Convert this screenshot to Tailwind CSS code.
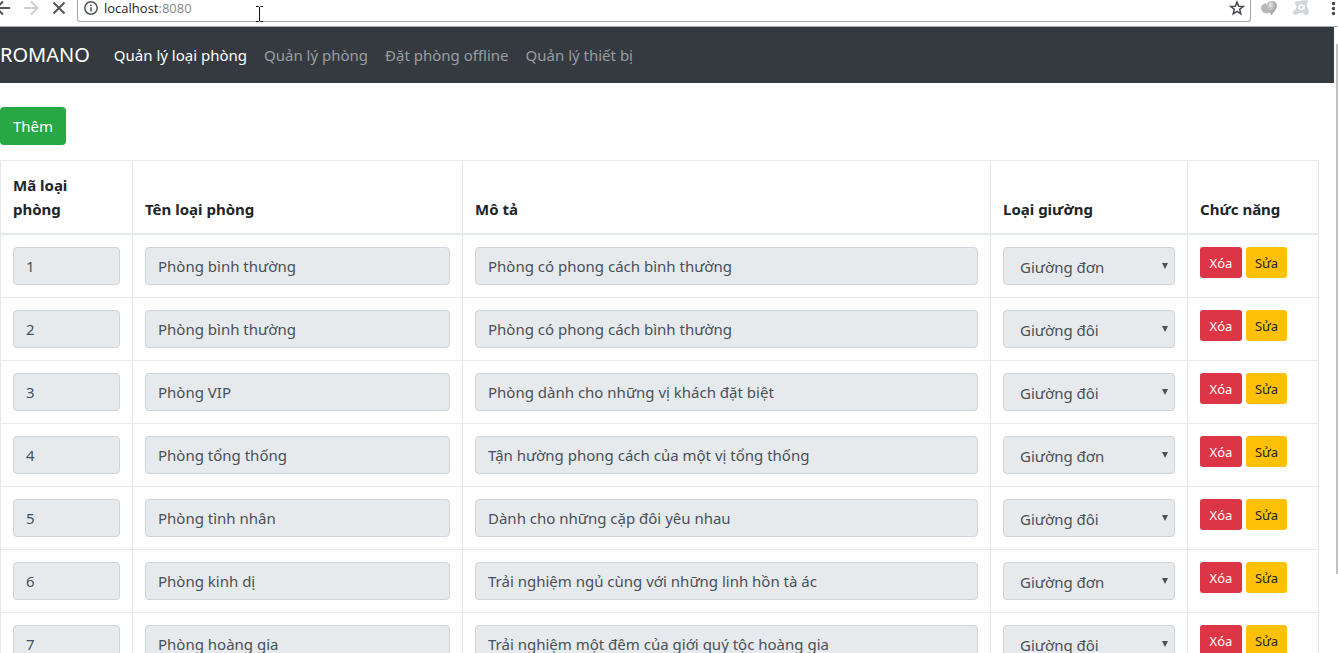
<!DOCTYPE html>
<html lang="vi">
<head>
<meta charset="utf-8">
<title>ROMANO</title>
<script src="https://cdn.jsdelivr.net/npm/@tailwindcss/browser@4"></script>
</head>
<body class="flex h-screen flex-col overflow-hidden bg-[#fefefe] font-['Noto_Sans','Open_Sans',sans-serif] text-[15px] leading-6 text-[#212529]">
<header class="flex h-[27px] shrink-0 items-start border-b border-[#a9acab] bg-[#fefefe]">
  <div class="flex w-[77px] shrink-0">
    <button aria-label="Back" class="-ml-2 h-4 w-5"><svg width="20" height="16" viewBox="0 0 20 16" fill="none" stroke="#50555a" stroke-width="2"><path d="M18 8H5M11 1.500L4.500 8l6.500 6.500"/></svg></button>
    <button aria-label="Forward" class="ml-2.5 h-4 w-5"><svg width="20" height="16" viewBox="0 0 20 16" fill="none" stroke="#ccced0" stroke-width="2"><path d="M2 8h13M9 1.500L15.500 8 9 14.500"/></svg></button>
    <button aria-label="Stop" class="ml-2 h-4 w-[18px]"><svg width="18" height="16" viewBox="0 0 18 16" fill="none" stroke="#50555a" stroke-width="2"><path d="M3.500 2.500l11 11M14.500 2.500l-11 11"/></svg></button>
  </div>
  <div class="flex h-[22px] flex-1 rounded-b-[3px] border-x border-b border-[#a3a6a6] bg-white px-1.5">
    <svg class="mt-px shrink-0" width="14" height="14" viewBox="0 0 14 14" fill="none" stroke="#50555a" stroke-width="1.500"><circle cx="7" cy="7" r="6.200"/><path d="M7 6.300v4.200M7 3.500v1.600"/></svg>
    <a href="#" class="ml-1.5 w-[90px] font-['Open_Sans','Noto_Sans',sans-serif] text-[13px] leading-4 text-[#1f2326]">localhost<span class="text-[#85898c]">:8080</span></a>
    <svg class="ml-[61px] mt-1.5" width="9" height="16" viewBox="0 0 9 16" fill="none" stroke="#111" stroke-width="1"><path d="M1 .5h2.500l1 1 1-1H8M4.500 1v14M1 15.500h2.500l1-1 1 1H8"/></svg>
    <button aria-label="Bookmark" class="-mr-px ml-auto h-4 w-4"><svg width="16" height="16" viewBox="0 0 16 16" fill="none" stroke="#454a50" stroke-width="1.500"><path d="M8 2l1.700 4.200 4.500.3-3.500 2.900 1.100 4.400L8 11.400l-3.800 2.400 1.100-4.400-3.500-2.900 4.500-.3z"/></svg></button>
  </div>
  <div class="flex w-[87px] shrink-0 overflow-hidden pl-[9px]">
    <svg class="shrink-0" width="18" height="17" viewBox="0 0 18 17">
      <defs><radialGradient id="balloon" cx=".4" cy=".3" r=".7"><stop stop-color="#e5e5e5"/><stop offset="1" stop-color="#8e8e8e"/></radialGradient></defs>
      <path d="M6 3C2 4 0 7 1.500 10.500 3 13.500 7 14 9 13z" fill="#b9b9b9"/><path d="M11.500 1c4 0 6 3 5 6.500-.8 3-3 4.500-5 7.500-.5-2-4-3.500-5-6.500C5.500 5 8 1 11.500 1z" fill="url(#balloon)"/>
    </svg>
    <svg class="ml-3.5 shrink-0" width="18" height="17" viewBox="0 0 18 17"><path d="M7 1.500C9 0 13 .2 16 .3c.8 1.200-1 2.700-1.200 4.700-.2 2 2.500 4.500 2 8-.5 2.200-2.800 2.700-4.600 1.200C10 12.300 8 13 6 13.800 4 15.500 1 14.800.8 12.800.7 10.500 4 10.500 4.300 7.500 4.500 5.500 2.500 4.500 3 2.500 3.800.8 5.500 1 7 1.500z" fill="#d3d6d9"/><circle cx="9.200" cy="7.300" r="2.200" fill="none" stroke="#fff" stroke-width="1.500"/><path d="M12 5v4.500M1.500 4.500l3 2.500M10 13l2 2" stroke="#fff" stroke-width="1.200"/></svg>
    <button aria-label="Menu" class="ml-[15px] h-4 w-4 shrink-0"><svg width="10" height="16" viewBox="0 0 10 16" fill="#454a50"><circle cx="8.500" cy="3.500" r="1.700"/><circle cx="8.500" cy="8.500" r="1.700"/><circle cx="8.500" cy="13.500" r="1.700"/></svg></button>
  </div>
</header>
<div class="flex min-h-0 flex-1">
  <div class="min-w-0 flex-1 overflow-hidden">
    <nav class="flex h-14 items-center bg-[#343a40] text-[#9a9da0]">
      <a href="#" class="mr-6 text-[20px] leading-[30px] text-white">ROMANO</a>
      <div class="flex gap-[17px]">
        <a href="#" class="text-white">Quản lý loại phòng</a>
        <a href="#">Quản lý phòng</a>
        <a href="#">Đặt phòng offline</a>
        <a href="#">Quản lý thiết bị</a>
      </div>
    </nav>
    <main class="pr-[15px] pt-6">
      <button class="h-[38px] rounded bg-[#28a745] px-[13px] text-white">Thêm</button>
      <table class="mt-[15px] w-full table-fixed border-collapse border border-[#e6e9ec]">
        <thead>
          <tr class="border-b-2 border-[#e6e9ec] text-left align-bottom">
            <th class="w-[132px] border-x border-[#e6e9ec] p-3 font-bold">Mã loại<br>phòng</th>
            <th class="w-[330px] border-x border-[#e6e9ec] p-3 font-bold">Tên loại phòng</th>
            <th class="w-[528px] border-x border-[#e6e9ec] p-3 font-bold">Mô tả</th>
            <th class="w-[197px] border-x border-[#e6e9ec] p-3 font-bold">Loại giường</th>
            <th class="w-[131px] border-x border-[#e6e9ec] p-3 font-bold">Chức năng</th>
          </tr>
        </thead>
        <tbody id="rows"></tbody>
      </table>
    </main>
  </div>
  <div class="flex w-1 shrink-0 justify-end pt-[17px]"><div class="h-[530px] w-0.5 bg-[#c1c1c1]"></div></div>
</div>
<script>
const rooms = [
  ["Phòng bình thường", "Phòng có phong cách bình thường", "Giường đơn"],
  ["Phòng bình thường", "Phòng có phong cách bình thường", "Giường đôi"],
  ["Phòng VIP", "Phòng dành cho những vị khách đặt biệt", "Giường đôi"],
  ["Phòng tổng thống", "Tận hường phong cách của một vị tổng thống", "Giường đơn"],
  ["Phòng tình nhân", "Dành cho những cặp đôi yêu nhau", "Giường đôi"],
  ["Phòng kinh dị", "Trải nghiệm ngủ cùng với những linh hồn tà ác", "Giường đơn"],
  ["Phòng hoàng gia", "Trải nghiệm một đêm của giới quý tộc hoàng gia", "Giường đôi"]
];
const cell = "border border-[#e6e9ec] p-3 align-top";
const field = "block h-[38px] w-full rounded border border-[#ced4da] bg-[#e7eaed] px-3 text-[#495057]";
document.getElementById("rows").innerHTML = rooms.map(([name, description, bed], i) => `
  <tr>
    <td class="${cell}"><input aria-label="Mã loại phòng" class="${field}" value="${i + 1}" disabled></td>
    <td class="${cell}"><input aria-label="Tên loại phòng" class="${field}" value="${name}" disabled></td>
    <td class="${cell}"><input aria-label="Mô tả" class="${field}" value="${description}" disabled></td>
    <td class="${cell}"><div class="relative"><select aria-label="Loại giường" class="${field} appearance-none pl-4 pt-0.5 opacity-100" disabled><option>${bed}</option></select><svg class="absolute right-[7px] top-4" width="6" height="6" viewBox="0 0 6 6"><path d="M0 0h6L3 6z" fill="#495057"/></svg></div></td>
    <td class="${cell}"><div class="flex gap-1"><button class="h-[31px] min-w-[42px] rounded-[3px] bg-[#dc3545] px-2 text-[13px] text-white">Xóa</button><button class="h-[31px] min-w-[41px] rounded-[3px] bg-[#ffc107] px-2 text-[13px]">Sửa</button></div></td>
  </tr>`).join("");
</script>
</body>
</html>
